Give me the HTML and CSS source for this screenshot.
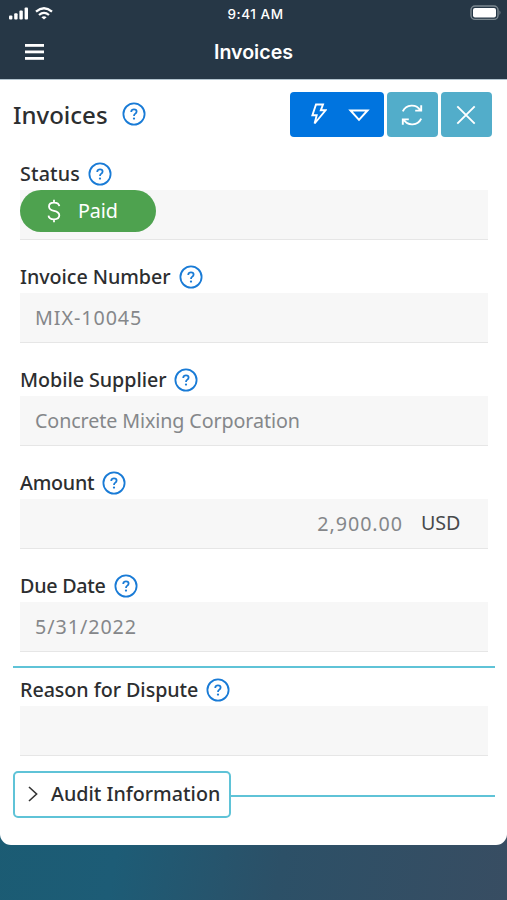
FILE: index.html
```
<!DOCTYPE html>
<html lang="en">
<head>
<meta charset="utf-8">
<title>Invoices</title>
<link rel="stylesheet" href="styles.css">
</head>
<body>
<svg class="defs" aria-hidden="true">
  <symbol id="help" viewBox="0 0 24 24">
    <circle cx="12" cy="12" r="10.6" fill="none" stroke="currentColor" stroke-width="1.8"/>
    <path d="M9.3 9.9V9.4Q9.6 7.4 12 7.4Q14.6 7.4 14.6 9.6Q14.6 11 13.2 11.7Q12 12.3 12 13.9" fill="none" stroke="currentColor" stroke-width="1.8"/>
    <circle cx="12" cy="16.6" r="1.15" fill="currentColor"/>
  </symbol>
</svg>
<header class="top">
  <div class="statusbar">
    <div class="signals">
      <svg width="20" height="13" viewBox="0 0 20 13" fill="#fff"><rect x="0" y="8.5" width="3.4" height="4" rx="1"/><rect x="5.2" y="6.3" width="3.4" height="6.2" rx="1"/><rect x="10.4" y="3.6" width="3.4" height="8.9" rx="1"/><rect x="15.6" y=".5" width="3.4" height="12" rx="1"/></svg>
      <svg width="18" height="13" viewBox="0 0 18 13" fill="none" stroke="#fff" stroke-width="2.3"><path d="M1 4.7Q9-2.1 17 4.7"/><path d="M4 8Q9 3.7 14 8"/><path d="M9 12.6L6.4 10.2Q9 8.2 11.6 10.2Z" fill="#fff" stroke="none"/></svg>
    </div>
    <span class="clock">9:41 AM</span>
    <svg class="battery" width="32" height="16" viewBox="0 0 32 16"><rect x="1" y="1" width="27" height="13.4" rx="4" fill="none" stroke="#7c8991" stroke-width="1.4"/><rect x="3" y="3" width="23" height="9.4" rx="2" fill="#fff"/><path d="M29.5 5.2Q31.5 7.5 29.5 10Z" fill="#7c8991"/></svg>
  </div>
  <nav class="navbar">
    <svg class="menu" width="19" height="16" viewBox="0 0 19 16" fill="#fff"><rect width="19" height="2.8"/><rect y="6.5" width="19" height="2.8"/><rect y="13" width="19" height="2.8"/></svg>
    <span class="title">Invoices</span>
  </nav>
</header>
<main class="card">
  <div class="toolbar">
    <h1>Invoices</h1>
    <svg class="help"><use href="#help"/></svg>
    <div class="actions">
      <button class="btn primary" aria-label="Actions">
        <svg width="16" height="23" viewBox="0 0 16 23" fill="none" stroke="#fff" stroke-width="1.9"><path d="M5 1.5H12L9.8 7.3H14.6L3.6 20.5L5.7 12.2H1.4Z"/></svg>
        <svg class="caret" width="22" height="13" viewBox="0 0 22 13" fill="none" stroke="#fff" stroke-width="2"><path d="M2.5 1.5H19.5L11 10.8Z"/></svg>
      </button>
      <button class="btn" aria-label="Refresh">
        <svg width="22" height="24" viewBox="0 0 22 24" fill="none" stroke="#fff" stroke-width="1.9"><path d="M1.8 8.4A10 10 0 0 1 19.4 7.4M20.2 2.2V7.6H14.2M20.2 15.6A10 10 0 0 1 2.6 16.6M1.8 21.8V16.4H7.8"/></svg>
      </button>
      <button class="btn" aria-label="Close">
        <svg width="20" height="20" viewBox="0 0 20 20" fill="none" stroke="#fff" stroke-width="1.9"><path d="M1.3 1.3L18.7 18.7M18.7 1.3L1.3 18.7"/></svg>
      </button>
    </div>
  </div>
  <section class="fields">
    <div class="field">
      <div class="label loose">Status<svg class="help"><use href="#help"/></svg></div>
      <div class="box badge-box"><span class="badge"><svg width="14" height="24" viewBox="0 0 14 24" fill="none" stroke="#fff" stroke-width="1.8"><path d="M12.3 7.2Q11.8 3.6 7 3.6Q2 3.6 2 7.5Q2 10.8 7 11.8Q12.3 12.9 12.3 16.3Q12.3 20.3 7 20.3Q2 20.3 1.5 16.6M7 .8V3.6M7 20.3V23.2"/></svg>Paid</span></div>
    </div>
    <div class="field">
      <div class="label">Invoice Number<svg class="help"><use href="#help"/></svg></div>
      <div class="box digits">MIX-10045</div>
    </div>
    <div class="field">
      <div class="label">Mobile Supplier<svg class="help"><use href="#help"/></svg></div>
      <div class="box">Concrete Mixing Corporation</div>
    </div>
    <div class="field">
      <div class="label tight">Amount<svg class="help"><use href="#help"/></svg></div>
      <div class="box amount"><span class="digits">2,900.00</span><span class="unit">USD</span></div>
    </div>
    <div class="field">
      <div class="label tight">Due Date<svg class="help"><use href="#help"/></svg></div>
      <div class="box digits">5/31/2022</div>
    </div>
  </section>
  <section class="fields dispute">
    <div class="field">
      <div class="label">Reason for Dispute<svg class="help"><use href="#help"/></svg></div>
      <div class="box"></div>
    </div>
  </section>
  <div class="audit">
    <button class="audit-toggle"><svg width="10" height="16" viewBox="0 0 10 16" fill="none" stroke="#333" stroke-width="1.6"><path d="M1 1L8.6 8L1 15"/></svg>Audit Information</button>
    <span class="line"></span>
  </div>
</main>
</body>
</html>
```
FILE: styles.css
```
* { box-sizing: border-box; }
body {
  margin: 0;
  height: 900px;
  overflow: hidden;
  font: 400 19.7px/26px "Noto Sans", sans-serif;
  color: #2c2e30;
  background: linear-gradient(100deg, #195b70 0%, #1d5c76 40%, #2c5067 65%, #384d62 100%);
}
button { font: inherit; color: inherit; padding: 0; border: 0; }
svg { flex: none; display: block; }
.defs { position: absolute; width: 0; height: 0; }
.top { height: 79px; background: #263746; color: #fff; font-family: Inter, sans-serif; }
.statusbar, .navbar { display: grid; grid-template-columns: 1fr auto 1fr; align-items: center; }
.statusbar { height: 27px; padding: 0 5px 0 9px; }
.signals { display: flex; gap: 6px; }
.signals svg { margin-top: -1px; }
.clock { font-size: 13.5px; font-weight: 500; letter-spacing: .55px; }
.battery { justify-self: end; margin-top: -1px; }
.navbar { height: 50px; padding: 0 25px; }
.title { font-size: 19.6px; font-weight: 600; grid-column: 2; }
.card { height: 766px; padding: 13px 13px 0; background: #fff; border-radius: 0 0 11px 11px; box-shadow: inset 0 1px #b3c4cf; }
.toolbar { height: 45px; display: flex; align-items: center; padding-right: 2px; }
h1 { margin: 0 14px 0 0; font-size: 24px; font-weight: 500; }
.help { width: 24px; height: 24px; color: #197bd6; }
.toolbar .help { margin-top: -1px; }
.actions { margin-left: auto; display: flex; gap: 3px; }
.btn { width: 51px; height: 45px; padding-right: 2px; border-radius: 4px; background: #52adca; display: flex; align-items: center; justify-content: center; }
.primary { width: 94px; background: #0074df; gap: 21px; padding: 0 0 0 7px; }
.caret { margin-top: 2px; }
.fields { padding: 24px 6px 0 7px; display: grid; gap: 24px; }
.label { height: 28px; padding-bottom: 3px; display: flex; align-items: center; gap: 8px; font-weight: 500; letter-spacing: -.05px; }
.loose { letter-spacing: .15px; }
.tight { letter-spacing: -.25px; }
.box { height: 50px; padding: 0 15px; margin-top: 1px; display: flex; align-items: center; background: #f7f7f7; border-bottom: 1px solid #e6e6e6; color: #85878a; letter-spacing: -.1px; }
.digits { letter-spacing: .95px; }
.badge-box { padding: 0; align-items: flex-start; }
.badge { width: 136px; height: 42px; padding-left: 27px; display: flex; align-items: center; gap: 17px; border-radius: 21px; background: #4ea24f; color: #fff; }
.amount { padding: 0; justify-content: flex-end; }
.unit { width: 85px; height: 49px; padding: 11px 0 0 18px; color: #47494b; }
.dispute { margin: 14px -1px 0 0; padding: 9px 7px 0; border-top: 2px solid #5fc3d7; }
.audit { margin: 15px -1px 0 0; display: flex; align-items: center; }
.audit-toggle { width: 218px; height: 47px; padding: 0 0 1px 13px; display: flex; align-items: center; gap: 13px; border: 2px solid #5fc3d7; border-radius: 5px; background: #fff; font-weight: 500; white-space: nowrap; }
.line { flex: 1; height: 2px; margin-top: 3px; background: #5fc3d7; }
```
